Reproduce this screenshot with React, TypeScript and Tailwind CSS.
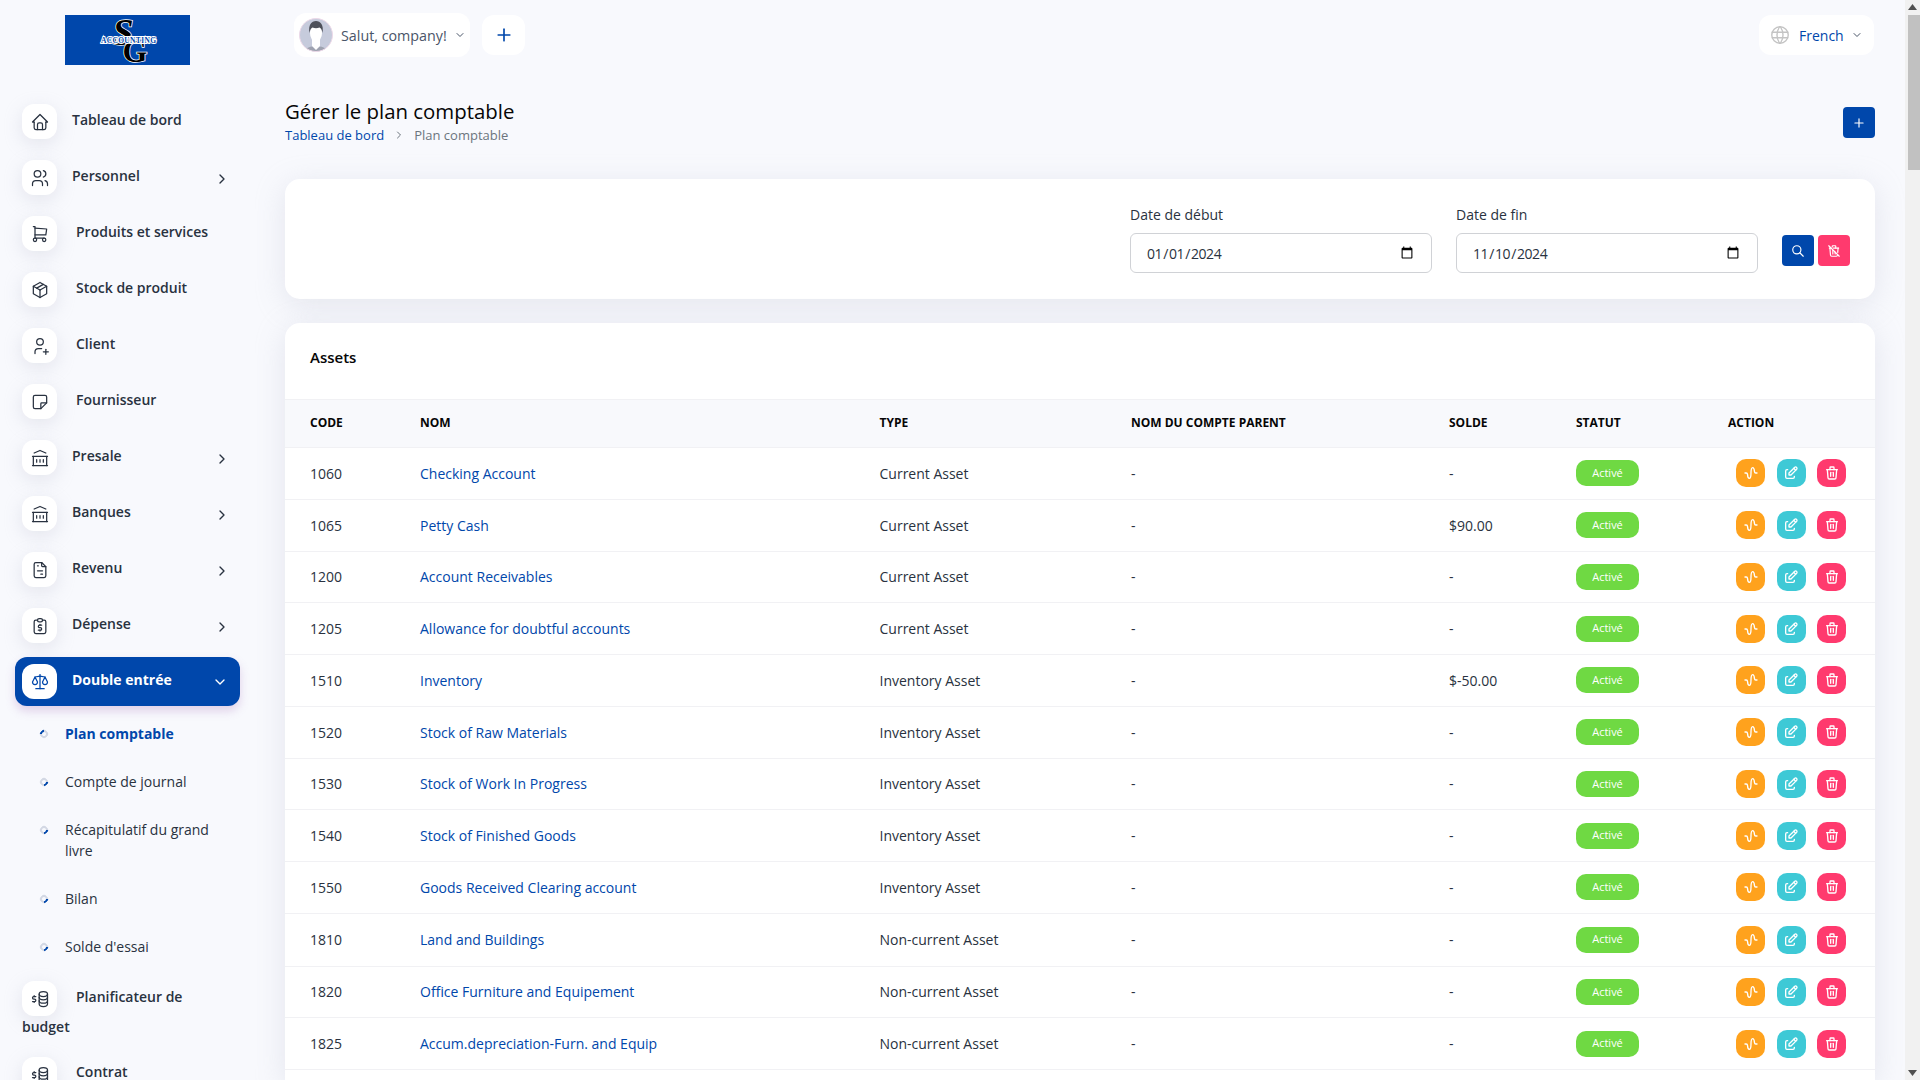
import type { ReactNode } from 'react'
import {
  TbBuildingBank,
  TbBusinessplan,
  TbChevronDown,
  TbChevronRight,
  TbEdit,
  TbFileInvoice,
  TbHome,
  TbNote,
  TbPackage,
  TbPlus,
  TbReportMoney,
  TbScale,
  TbSearch,
  TbShoppingCart,
  TbTrash,
  TbTrashOff,
  TbUserPlus,
  TbUsers,
  TbWaveSine,
  TbWorld,
} from 'react-icons/tb'

const rows = [
  { code: '1060', name: 'Checking Account', type: 'Current Asset', balance: '-' },
  { code: '1065', name: 'Petty Cash', type: 'Current Asset', balance: '$90.00' },
  { code: '1200', name: 'Account Receivables', type: 'Current Asset', balance: '-' },
  { code: '1205', name: 'Allowance for doubtful accounts', type: 'Current Asset', balance: '-' },
  { code: '1510', name: 'Inventory', type: 'Inventory Asset', balance: '$-50.00' },
  { code: '1520', name: 'Stock of Raw Materials', type: 'Inventory Asset', balance: '-' },
  { code: '1530', name: 'Stock of Work In Progress', type: 'Inventory Asset', balance: '-' },
  { code: '1540', name: 'Stock of Finished Goods', type: 'Inventory Asset', balance: '-' },
  { code: '1550', name: 'Goods Received Clearing account', type: 'Inventory Asset', balance: '-' },
  { code: '1810', name: 'Land and Buildings', type: 'Non-current Asset', balance: '-' },
  { code: '1820', name: 'Office Furniture and Equipement', type: 'Non-current Asset', balance: '-' },
  { code: '1825', name: 'Accum.depreciation-Furn. and Equip', type: 'Non-current Asset', balance: '-' },
]

const subItems = [
  { label: 'Plan comptable', active: true, height: 'h-[48px]' },
  { label: 'Compte de journal', active: false, height: 'h-[48px]' },
  { label: 'Récapitulatif du grand livre', active: false, height: 'h-[69px]' },
  { label: 'Bilan', active: false, height: 'h-[48px]' },
  { label: "Solde d'essai", active: false, height: 'h-[48px]' },
]

function IconBox({ children }: { children: ReactNode }) {
  return (
    <span className="inline-flex h-[35px] w-[35px] shrink-0 items-center justify-center rounded-[12px] bg-white align-middle text-[#293240] shadow-[0_5px_18px_rgba(182,186,203,0.3)]">
      {children}
    </span>
  )
}

function NavItem({ icon, label, wide, arrow }: { icon: ReactNode; label: string; wide?: boolean; arrow?: boolean }) {
  return (
    <div className="flex h-[56px] items-start pl-[22px] pr-[25px]">
      <IconBox>{icon}</IconBox>
      <span className={`${wide ? 'ml-[19px]' : 'ml-[15px]'} mt-[5px] text-[14px] leading-[21px] font-semibold text-[#293240]`}>{label}</span>
      {arrow && <TbChevronRight size={16} className="mt-[11px] ml-auto text-[#293240]" />}
    </div>
  )
}

function Logo() {
  return (
    <svg width="125" height="50" viewBox="0 0 125 50" className="ml-[65px] block">
      <rect width="125" height="50" fill="#0047ab" />
      <text x="58" y="30" fontSize="38" fontFamily="Liberation Serif" fontStyle="italic" fontWeight="700" fill="#000" stroke="#fff" strokeWidth="1.5" paintOrder="stroke" textAnchor="middle">S</text>
      <text x="70" y="47" fontSize="32" fontFamily="Liberation Serif" fontWeight="700" fill="#000" stroke="#fff" strokeWidth="1.5" paintOrder="stroke" textAnchor="middle">G</text>
      <text x="63.5" y="28" fontSize="7.5" fontFamily="Liberation Serif" fontWeight="700" fill="#0047ab" stroke="#fff" strokeWidth="2" paintOrder="stroke" textAnchor="middle" textLength="55">ACCOUNTING</text>
    </svg>
  )
}

function Avatar() {
  return (
    <svg width="34" height="34" viewBox="0 0 34 34" className="block shrink-0">
      <defs>
        <clipPath id="avatar-clip">
          <circle cx="17" cy="17" r="16.5" />
        </clipPath>
      </defs>
      <g clipPath="url(#avatar-clip)">
        <rect width="34" height="34" fill="#c6cbdc" />
        <path d="M5 34c1-4 7-6 12-6s11 2 12 6z" fill="#9ea2b0" />
        <path d="M13 20h8v8l-4 4-4-4z" fill="#fff" />
        <ellipse cx="17" cy="15" rx="6" ry="9" fill="#fff" />
        <path d="M10.500 15c-1.500-8 2-12 6.500-12s8 4 6.500 12c-.5-3-1.500-5-3-5.500-2 1-5 1-7 0-1.500.5-2.500 2.500-3 5.500z" fill="#4d505a" />
      </g>
      <circle cx="17" cy="17" r="16.500" fill="none" stroke="#ecd9e8" strokeWidth="1" />
    </svg>
  )
}

function Sidebar() {
  return (
    <aside className="w-[255px] shrink-0 pt-[15px]">
      <Logo />
      <nav className="mt-[39px]">
        <NavItem icon={<TbHome size={20} strokeWidth={1.5} />} label="Tableau de bord" />
        <NavItem icon={<TbUsers size={20} strokeWidth={1.5} />} label="Personnel" arrow />
        <NavItem icon={<TbShoppingCart size={20} strokeWidth={1.5} />} label="Produits et services" wide />
        <NavItem icon={<TbPackage size={20} strokeWidth={1.5} />} label="Stock de produit" wide />
        <NavItem icon={<TbUserPlus size={20} strokeWidth={1.5} />} label="Client" wide />
        <NavItem icon={<TbNote size={20} strokeWidth={1.5} />} label="Fournisseur" wide />
        <NavItem icon={<TbBuildingBank size={20} strokeWidth={1.5} />} label="Presale" arrow />
        <NavItem icon={<TbBuildingBank size={20} strokeWidth={1.5} />} label="Banques" arrow />
        <NavItem icon={<TbFileInvoice size={20} strokeWidth={1.5} />} label="Revenu" arrow />
        <NavItem icon={<TbReportMoney size={20} strokeWidth={1.5} />} label="Dépense" arrow />

        <div className="ml-[15px] flex h-[49px] w-[225px] -translate-y-[7px] items-center rounded-[12px] bg-[#0047ab] pl-[7px] pr-[12px] shadow-[0_5px_10px_rgba(170,120,190,0.3)]">
          <span className="inline-flex h-[35px] w-[35px] items-center justify-center rounded-[12px] bg-white text-[#0047ab]">
            <TbScale size={20} strokeWidth={1.5} />
          </span>
          <span className="ml-[15px] -translate-y-[2px] text-[14px] leading-[21px] font-bold text-white">Double entrée</span>
          <TbChevronDown size={16} className="ml-auto text-white" />
        </div>

        <ul className="mt-[-4px] pt-[14px]">
          {subItems.map((item) => (
            <li key={item.label} className={`flex ${item.height} items-start pl-[40px] pr-[30px]`}>
              <span className={`mt-[7px] h-[8px] w-[8px] shrink-0 rounded-full border-2 border-[#d3d8e4] border-t-[#0047ab] ${item.active ? '-rotate-45' : 'rotate-[135deg]'}`} />
              <span className={`ml-[17px] text-[14px] leading-[21px] ${item.active ? 'font-bold text-[#0047ab]' : 'text-[#293240]'}`}>{item.label}</span>
            </li>
          ))}
        </ul>

        <div className="mt-[-3px] pl-[22px] pr-[30px] text-[14px] leading-[22px] font-semibold text-[#293240]">
          <IconBox><TbBusinessplan size={20} strokeWidth={1.5} /></IconBox>
          <span className="ml-[19px]">Planificateur de budget</span>
        </div>
        <div className="mt-[19px] flex items-start pl-[22px]">
          <IconBox><TbBusinessplan size={20} strokeWidth={1.5} /></IconBox>
          <span className="ml-[19px] mt-[4px] text-[14px] leading-[21px] font-semibold text-[#293240]">Contrat</span>
        </div>
      </nav>
    </aside>
  )
}

function ActionButton({ color, children }: { color: string; children: ReactNode }) {
  return <span className={`flex h-[28px] w-[29px] items-center justify-center rounded-[10px] text-white ${color}`}>{children}</span>
}

function AccountsTable() {
  const th = 'px-[25px] pb-[2px] text-left text-[12px] font-bold uppercase text-[#060606]'
  return (
    <table className="w-full table-fixed border-collapse text-[14px] text-[#293240]">
      <colgroup>
        <col className="w-[110px]" />
        <col className="w-[459.5px]" />
        <col className="w-[251.5px]" />
        <col className="w-[318px]" />
        <col className="w-[127px]" />
        <col className="w-[152px]" />
        <col className="w-[172px]" />
      </colgroup>
      <thead>
        <tr className="h-[48px] border-y border-[#f1f1f4] bg-[#f8f9fc]">
          <th className={th}>Code</th>
          <th className={th}>Nom</th>
          <th className={th}>Type</th>
          <th className={th}>Nom du compte parent</th>
          <th className={th}>Solde</th>
          <th className={th}>Statut</th>
          <th className={th}>Action</th>
        </tr>
      </thead>
      <tbody>
        {rows.map((row) => (
          <tr key={row.code} className={`${row.code === '1810' ? 'h-[52.75px]' : 'h-[51.75px]'} border-b border-[#f1f1f4]`}>
            <td className="px-[25px]">{row.code}</td>
            <td className="px-[25px] text-[#0047ab]">{row.name}</td>
            <td className="px-[25px]">{row.type}</td>
            <td className="px-[25px]">-</td>
            <td className="px-[25px]">{row.balance}</td>
            <td className="pl-[25px]">
              <span className="flex h-[26px] w-[63px] items-center justify-center rounded-[10px] bg-[#6fd943] text-[11px] text-white">Activé</span>
            </td>
            <td className="pl-[33px]">
              <div className="flex gap-[11.5px]">
                <ActionButton color="bg-[#ffa21d]"><TbWaveSine size={16} /></ActionButton>
                <ActionButton color="bg-[#3ec9d6]"><TbEdit size={16} /></ActionButton>
                <ActionButton color="bg-[#ff3a6e]"><TbTrash size={16} /></ActionButton>
              </div>
            </td>
          </tr>
        ))}
      </tbody>
    </table>
  )
}

function DateField({ label, value }: { label: string; value: string }) {
  return (
    <div className="w-[302px]">
      <label className="block text-[14px] leading-[21px] text-[#293240]">{label}</label>
      <input
        type="date"
        defaultValue={value}
        className="mt-[8px] block h-[40px] w-full rounded-[6px] border border-[#d0d2d6] bg-white px-[15px] text-[14px] tracking-[-0.4px] text-[#293240]"
      />
    </div>
  )
}

function Scrollbar() {
  return (
    <div className="flex w-[15px] shrink-0 flex-col items-center justify-between bg-[#f1f1f1]">
      <div className="flex w-full flex-col items-center">
        <svg width="9" height="15" viewBox="0 0 9 15">
          <polygon points="4.5,4 9,10 0,10" fill="#505050" />
        </svg>
        <div className="h-[155px] w-[12px] self-end bg-[#c1c1c1]" />
      </div>
      <svg width="9" height="15" viewBox="0 0 9 15">
        <polygon points="0,5 9,5 4.5,11" fill="#505050" />
      </svg>
    </div>
  )
}

export default function App() {
  return (
    <div className="flex h-[1080px] w-[1920px] overflow-hidden bg-[#f8f9fd] font-['Open_Sans',sans-serif]">
      <Sidebar />
      <main className="min-w-0 flex-1 overflow-hidden px-[30px]">
        <header className="mt-[13px] flex h-[44px] items-center pl-[9px] text-[14px]">
          <div className="flex h-[44px] w-[176px] items-center rounded-[12px] bg-white pl-[5px] text-[#4a5568]">
            <Avatar />
            <span className="mt-[1px] ml-[8px] text-[14.3px]">Salut, company!</span>
            <TbChevronDown size={12} className="ml-[7px]" />
          </div>
          <button className="ml-[12px] flex h-[40px] w-[43px] items-center justify-center rounded-[12px] bg-white text-[#0047ab]">
            <TbPlus size={20} />
          </button>
          <div className="mr-px ml-auto flex h-[40px] w-[115px] items-center rounded-[12px] bg-white pl-[10px]">
            <TbWorld size={22} strokeWidth={1.5} className="text-[#c4c4c4]" />
            <span className="ml-[8px] text-[#0047ab]">French</span>
            <TbChevronDown size={12} className="ml-[7px] text-[#4a5568]" />
          </div>
        </header>

        <div className="mt-[41px] mb-[34px] flex items-start justify-between">
          <div>
            <h1 className="text-[20.4px] leading-[27px] font-medium text-[#060606]">Gérer le plan comptable</h1>
            <div className="flex items-center text-[13px] leading-[20px]">
              <span className="text-[#0047ab]">Tableau de bord</span>
              <TbChevronRight size={12} className="mx-[9px] text-[#6c757d]" />
              <span className="text-[#6c757d]">Plan comptable</span>
            </div>
          </div>
          <button className="mt-[9px] flex h-[31px] w-[32px] items-center justify-center rounded-[4px] bg-[#0047ab] text-white">
            <TbPlus size={14} />
          </button>
        </div>

        <section className="flex h-[120px] justify-end gap-[24px] rounded-[15px] bg-white pt-[25px] pr-[25px] shadow-[0_6px_30px_rgba(182,186,203,0.3)]">
          <DateField label="Date de début" value="2024-01-01" />
          <DateField label="Date de fin" value="2024-11-10" />
          <div className="flex gap-[4px] pt-[31px]">
            <button className="flex h-[31px] w-[32px] items-center justify-center rounded-[4px] bg-[#0047ab] text-white">
              <TbSearch size={14} />
            </button>
            <button className="flex h-[31px] w-[32px] items-center justify-center rounded-[4px] bg-[#ff3a6e] text-white">
              <TbTrashOff size={14} />
            </button>
          </div>
        </section>

        <section className="mt-[24px] h-[757px] rounded-t-[15px] bg-white shadow-[0_6px_30px_rgba(182,186,203,0.3)]">
          <h2 className="flex h-[76px] items-center pb-[7px] pl-[25px] text-[15px] font-semibold text-[#060606]">Assets</h2>
          <AccountsTable />
        </section>
      </main>
      <Scrollbar />
    </div>
  )
}
